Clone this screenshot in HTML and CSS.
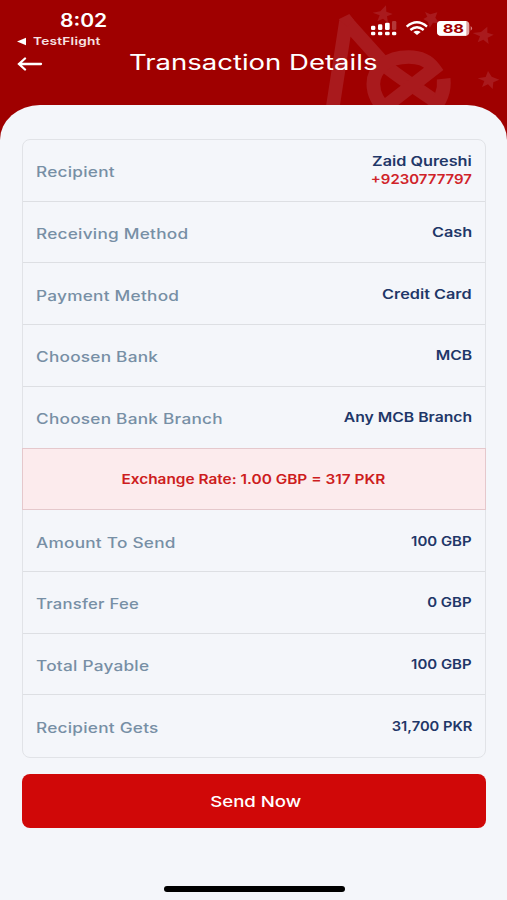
FILE: index.html
```html
<!DOCTYPE html>
<html lang="en">
<head>
<meta charset="utf-8">
<title>Transaction Details</title>
<link rel="stylesheet" href="styles.css">
</head>
<body>
<div class="screen">
  <header class="header">
    <svg class="watermark" viewBox="0 0 759 420" aria-hidden="true">
      <g fill="none" stroke="#a91a1d" stroke-width="41" stroke-linejoin="miter">
        <path stroke-linejoin="bevel" d="M235 330L276 64L400 202Q420 220 545 304"/>
        <path d="M380 330L540 206C518 175 490 171 464 171C400 171 358 206 358 252Q358 295 400 335"/>
        <path d="M569 236Q575 290 530 335"/>
      </g>
      <path d="M254 58L286 42L300 60L280 80Z"/>
      <g>
        <path d="M396 16L397 35L416 42L399 49L402 68L387 56L370 64L377 46L356 38L379 34Z"/>
        <path d="M513 36L529 43L550 37L544 53L556 70L537 68L527 83L522 66L508 57L520 50Z"/>
        <path d="M700 80L700 98L719 104L701 113L704 132L688 119L671 127L678 109L656 99L681 96Z"/>
        <path d="M702 213L713 230L736 239L718 247L716 267L702 253L684 261L691 243L671 235L695 231Z"/>
      </g>
    </svg>
    <div class="status">
      <div class="clock"><span class="time">8:02</span></div>
      <svg class="indicators" viewBox="0 0 303 48" aria-hidden="true">
        <g fill="#fff"><rect x="0" y="14" width="13" height="13" rx="4"/><rect x="21" y="10" width="13" height="17" rx="4"/><rect x="42" y="5" width="14" height="22" rx="4"/><rect x="63" y="0" width="13" height="27" rx="4" opacity=".22"/>
        <rect x="0" y="32" width="13" height="11" rx="4"/><rect x="21" y="32" width="13" height="11" rx="4"/><rect x="42" y="32" width="14" height="11" rx="4"/><rect x="63" y="32" width="13" height="11" rx="4"/></g>
        <g fill="none" stroke="#fff" stroke-width="7"><path d="M107 17Q138-9 168 17"/><path d="M118 27Q138 10 158 27"/></g><path d="M127 33Q138 25 149 33L138 42Z" fill="#fff"/>
        <rect x="198" width="97" height="44" rx="12" fill="#e3a8a8"/><path d="M210 0H286V44H210Q198 44 198 32V12Q198 0 210 0Z" fill="#fff"/><path d="M299 15Q308 22 299 29Z" fill="#d77f7f"/>
        <text x="247" y="36" class="battery" textLength="64" lengthAdjust="spacingAndGlyphs">88</text>
      </svg>
    </div>
    <div class="return"><svg viewBox="0 0 10 9"><path d="M0 4.5L9 .8V8.2Z" fill="#fff"/></svg><span>TestFlight</span></div>
    <div class="titlebar">
      <svg class="back" viewBox="0 0 26 14"><path d="M24 7H2M8 1.5L2 7L8 12.5" fill="none" stroke="#fff" stroke-width="2.3" stroke-linecap="round"/></svg>
      <h1>Transaction Details</h1>
    </div>
  </header>
  <main class="panel">
    <section class="card">
      <div class="row"><span class="label">Recipient</span><div class="value"><b class="wide">Zaid Qureshi</b><b class="phone">+9230777797</b></div></div>
      <div class="row"><span class="label">Receiving Method</span><div class="value"><b class="wide">Cash</b></div></div>
      <div class="row"><span class="label">Payment Method</span><div class="value"><b class="wide">Credit Card</b></div></div>
      <div class="row"><span class="label">Choosen Bank</span><div class="value"><b class="bank">MCB</b></div></div>
      <div class="row"><span class="label">Choosen Bank Branch</span><div class="value"><b class="bank">Any MCB Branch</b></div></div>
      <div class="row rate"><span>Exchange Rate: 1.00 GBP = 317 PKR</span></div>
      <div class="row"><span class="label">Amount To Send</span><div class="value"><b>100 GBP</b></div></div>
      <div class="row"><span class="label short">Transfer Fee</span><div class="value"><b>0 GBP</b></div></div>
      <div class="row"><span class="label">Total Payable</span><div class="value"><b>100 GBP</b></div></div>
      <div class="row"><span class="label">Recipient Gets</span><div class="value"><b class="total">31,700 PKR</b></div></div>
    </section>
    <button class="send"><span>Send Now</span></button>
    <div class="home"></div>
  </main>
</div>
</body>
</html>
```
FILE: styles.css
```css
* { box-sizing: border-box; }
body { margin: 0; background: #9f0000; font-family: Inter, "Liberation Sans", sans-serif; }
.screen { width: 507px; height: 900px; display: flex; flex-direction: column; overflow: hidden; }
.header { height: 105px; flex: none; color: #fff; position: relative; }
.watermark { position: absolute; left: 254px; top: 0; width: 253px; height: 140px; fill: #a91a1d; }
.status { height: 34px; padding: 10px 35px 0 60px; display: flex; justify-content: space-between; position: relative; }
.time { display: inline-block; font-size: 18px; font-weight: 600; line-height: 20px; transform: translateY(1px) scaleX(1.17); transform-origin: left; }
.indicators { width: 101px; height: 16px; margin-top: 11px; overflow: visible; }
.battery { font: 700 36px Inter, sans-serif; fill: #a00000; text-anchor: middle; }
.return { height: 14px; padding-left: 17px; display: flex; align-items: center; gap: 6px; font-size: 11px; font-weight: 600; line-height: 14px; color: #f7e2e2; }
.return svg { width: 10px; height: 9px; }
.return span { transform: scaleX(1.24); transform-origin: left; letter-spacing: .2px; }
.titlebar { height: 30px; padding-left: 17px; display: flex; align-items: center; position: relative; }
.back { width: 26px; height: 14px; margin-top: 2px; }
h1 { margin: -1px 0 0 86px; font-size: 21px; font-weight: 400; line-height: 28px; white-space: nowrap; transform: scaleX(1.31); transform-origin: left; }
.panel { flex: 1; background: #f4f6fa; border-radius: 40px 40px 0 0 / 35px 35px 0 0; padding: 34px 21px 0 22px; display: flex; flex-direction: column; position: relative; }
.card { height: 619px; border: 1px solid #e1e3e7; border-radius: 8px; display: grid; grid-template-rows: repeat(10, 1fr); }
.row { display: flex; justify-content: space-between; align-items: center; padding: 0 13px; border-bottom: 1px solid #dddfe3; white-space: nowrap; }
.row:last-child { border-bottom: 0; }
.label { color: #778fa5; font-size: 14px; font-weight: 500; padding-top: 3px; transform: scaleX(1.23); transform-origin: left; letter-spacing: .2px; }
.label.short { transform: scaleX(1.19); }
.value { display: flex; flex-direction: column; align-items: flex-end; color: #1f3768; font-size: 13px; line-height: 18px; }
.value b { font-weight: 600; transform: scaleX(1.15); transform-origin: right; }
.value .wide { transform: scaleX(1.25); }
.value .bank { transform: scaleX(1.21); }
.value .total { transform: scaleX(1.13); }
.value .phone { color: #d02329; }
.rate { justify-content: center; margin: -1px -1px 0; background: #fcebed; border: 1px solid #e5c8cc; color: #cd1c20; font-size: 13px; font-weight: 600; }
.rate span { transform: translateX(-1px) scaleX(1.185); }
.send { height: 54px; margin-top: 16px; border: 0; border-radius: 8px; background: #d00808; color: #fff; font: 500 15px Inter, sans-serif; flex: none; }
.send span { display: inline-block; transform: translateX(2px) scaleX(1.24); }
.home { width: 181px; height: 6px; border-radius: 3px; background: #000; margin: 58px 0 0 142px; }
```
